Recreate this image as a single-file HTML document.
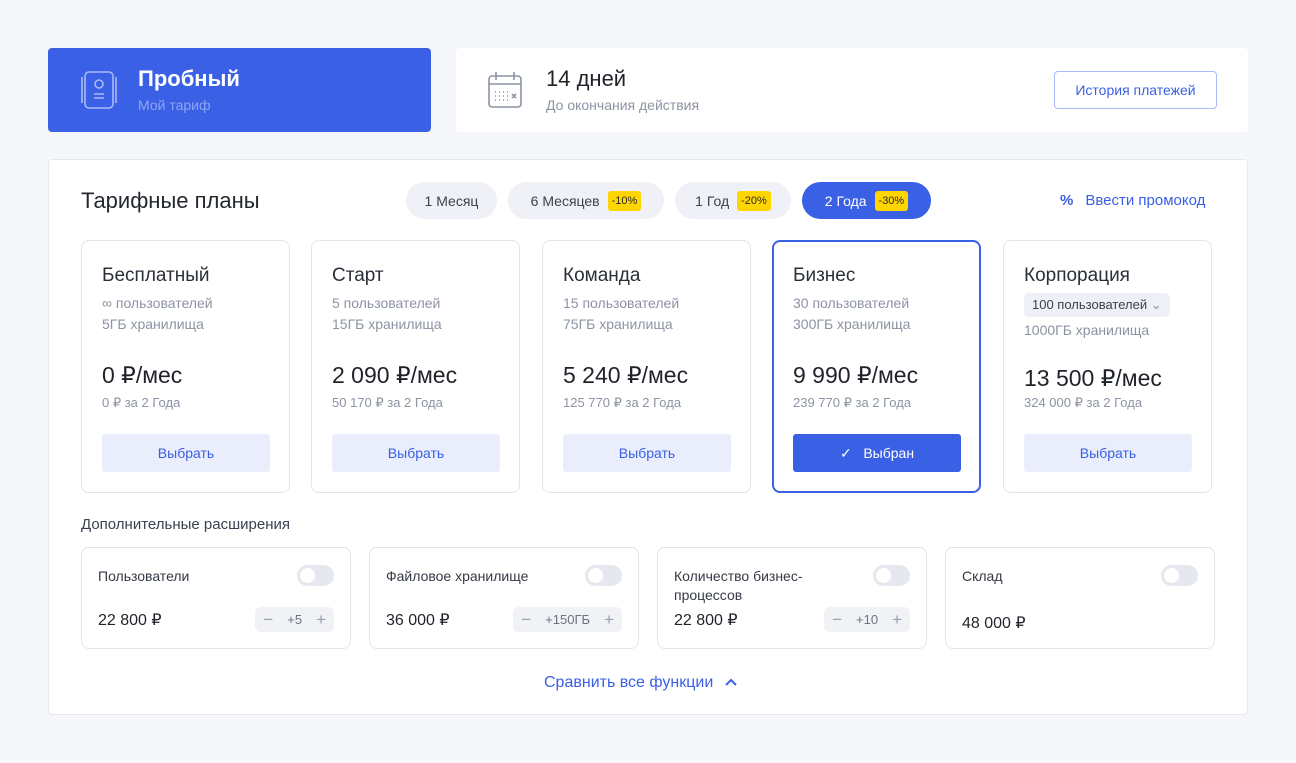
<!DOCTYPE html><html><head><meta charset="utf-8"><style>
*{box-sizing:border-box;margin:0;padding:0}
body{width:1296px;height:763px;background:#f6f7fb;font-family:"Liberation Sans",sans-serif;position:relative;overflow:hidden;color:#1f2329}
.a{position:absolute}
.top1{left:48px;top:48px;width:383px;height:84px;background:#3a60e6;border-radius:4px}
.top2{left:456px;top:48px;width:792px;height:84px;background:#fff;border-radius:4px}
.panel{left:48px;top:159px;width:1200px;height:556px;background:#fff;border:1px solid #e6e8f0;border-radius:4px}
.pill{top:182px;height:37px;border-radius:19px;background:#eff1f6;font-size:14px;color:#3b4150;display:flex;align-items:center;justify-content:center;gap:8px}
.badge{background:#ffd500;color:#2a2a2a;font-size:11px;padding:4px 4px;border-radius:3px}
.card{top:240px;width:209px;height:253px;border:1px solid #e3e5ee;border-radius:8px;background:#fff;padding:0 20px}
.card h3{font-weight:normal;font-size:19px;margin-top:24px;color:#2a2f3a}
.g{color:#8c93a3;font-size:14px;line-height:21px}
.pr{font-size:23px;color:#1f2329;margin-top:27px;font-weight:500}
.sm{font-size:13px;color:#8c93a3;margin-top:6px}
.btn{position:absolute;left:20px;bottom:20px;width:168px;height:38px;background:#eaeefc;color:#3a5fe5;font-size:14px;display:flex;align-items:center;justify-content:center;border-radius:3px}
.ad{top:547px;width:270px;height:102px;border:1px solid #e3e5ee;border-radius:8px;background:#fff}
.ad .t{position:absolute;left:16px;top:19px;font-size:14px;color:#353a45;line-height:19px}
.ad .p{position:absolute;left:16px;top:62px;font-size:16px;color:#1f2329}
.tg{position:absolute;right:16px;top:17px;width:37px;height:21px;border-radius:11px;background:#e6e8ef}
.tg:after{content:"";position:absolute;left:3px;top:3px;width:15px;height:15px;border-radius:50%;background:#fff}
.st{position:absolute;right:16px;top:59px;height:25px;border-radius:6px;background:#f1f2f6;display:flex;align-items:center;gap:14px;padding:0 8px;font-size:13px;color:#6b7282}
.st b{font-weight:normal;color:#9aa0ad;font-size:17px}
</style></head><body>
<div class="a top1">
<svg class="a" style="left:31px;top:22px" width="40" height="40" viewBox="0 0 40 40" fill="none" stroke="#a9bbf5" stroke-width="1.6"><rect x="6" y="2" width="28" height="36" rx="4"/><path d="M3 7v26M37 7v26"/><circle cx="20" cy="14" r="4"/><path d="M15 24h10M15 28h10"/></svg>
<div class="a" style="left:90px;top:18px;color:#fff;font-size:22px;font-weight:bold">Пробный</div>
<div class="a" style="left:90px;top:49px;color:#8ea6f2;font-size:14px">Мой тариф</div>
</div>
<div class="a top2">
<svg class="a" style="left:30px;top:22px" width="40" height="40" viewBox="0 0 40 40" fill="none" stroke="#8c93a3" stroke-width="1.6"><rect x="3" y="6" width="32" height="31" rx="3"/><path d="M3 14h32M10 2v8M28 2v8"/><path d="M9 22h1M13 22h1M17 22h1M21 22h1M9 26h1M13 26h1M17 26h1M21 26h1M9 30h1M13 30h1M17 30h1M21 30h1M26 24l4 4M30 24l-4 4"/></svg>
<div class="a" style="left:90px;top:18px;font-size:22px">14 дней</div>
<div class="a" style="left:90px;top:49px;color:#8c93a3;font-size:14px">До окончания действия</div>
<div class="a" style="left:598px;top:23px;width:163px;height:38px;border:1px solid #a9bbf5;border-radius:4px;color:#3a5fe5;font-size:14px;display:flex;align-items:center;justify-content:center">История платежей</div>
</div>
<div class="a panel"></div>
<div class="a" style="left:81px;top:188px;font-size:22px;color:#23272f">Тарифные планы</div>
<div class="a pill" style="left:406px;width:91px">1 Месяц</div>
<div class="a pill" style="left:508px;width:156px">6 Месяцев <span class="badge">-10%</span></div>
<div class="a pill" style="left:675px;width:116px">1 Год <span class="badge">-20%</span></div>
<div class="a pill" style="left:802px;width:129px;background:#3a60e6;color:#fff">2 Года <span class="badge">-30%</span></div>
<div class="a" style="left:1060px;top:192px;color:#3a5fe5;font-size:15px"><span style="font-weight:bold;margin-right:12px">%</span>Ввести промокод</div>

<div class="a card" style="left:81px"><h3>Бесплатный</h3><div class="g" style="margin-top:6px">∞ пользователей<br>5ГБ хранилища</div><div class="pr">0 ₽/мес</div><div class="sm">0 ₽ за 2 Года</div><div class="btn">Выбрать</div></div>
<div class="a card" style="left:311px"><h3>Старт</h3><div class="g" style="margin-top:6px">5 пользователей<br>15ГБ хранилища</div><div class="pr">2 090 ₽/мес</div><div class="sm">50 170 ₽ за 2 Года</div><div class="btn">Выбрать</div></div>
<div class="a card" style="left:542px"><h3>Команда</h3><div class="g" style="margin-top:6px">15 пользователей<br>75ГБ хранилища</div><div class="pr">5 240 ₽/мес</div><div class="sm">125 770 ₽ за 2 Года</div><div class="btn">Выбрать</div></div>
<div class="a card" style="left:772px;border:2px solid #3a60e6;padding:0 19px"><h3 style="margin-top:23px">Бизнес</h3><div class="g" style="margin-top:6px">30 пользователей<br>300ГБ хранилища</div><div class="pr">9 990 ₽/мес</div><div class="sm">239 770 ₽ за 2 Года</div><div class="btn" style="left:19px;bottom:19px;background:#3a60e6;color:#fff">✓&nbsp;&nbsp;&nbsp;Выбран</div></div>
<div class="a card" style="left:1003px"><h3>Корпорация</h3><div style="margin-top:6px;display:inline-block;background:#eef0f6;border-radius:5px;padding:4px 8px;font-size:13px;color:#3b4150">100 пользователей <span style="color:#8c93a3">⌄</span></div><div class="g" style="margin-top:3px">1000ГБ хранилища</div><div class="pr" style="margin-top:24px">13 500 ₽/мес</div><div class="sm" style="margin-top:3px">324 000 ₽ за 2 Года</div><div class="btn">Выбрать</div></div>

<div class="a" style="left:81px;top:516px;font-size:15px;color:#3b4150">Дополнительные расширения</div>
<div class="a ad" style="left:81px"><div class="t">Пользователи</div><div class="tg"></div><div class="p">22 800 ₽</div><div class="st"><b>−</b>+5<b>+</b></div></div>
<div class="a ad" style="left:369px"><div class="t">Файловое хранилище</div><div class="tg"></div><div class="p">36 000 ₽</div><div class="st"><b>−</b>+150ГБ<b>+</b></div></div>
<div class="a ad" style="left:657px"><div class="t">Количество бизнес-<br>процессов</div><div class="tg"></div><div class="p">22 800 ₽</div><div class="st"><b>−</b>+10<b>+</b></div></div>
<div class="a ad" style="left:945px"><div class="t">Склад</div><div class="tg"></div><div class="p" style="top:65px">48 000 ₽</div></div>
<div class="a" style="left:544px;top:674px;color:#3a5fe5;font-size:16px">Сравнить все функции <svg width="14" height="10" viewBox="0 0 14 10" style="margin-left:6px"><path d="M2 8l5-5 5 5" fill="none" stroke="#3a5fe5" stroke-width="2"/></svg></div>
</body></html>
